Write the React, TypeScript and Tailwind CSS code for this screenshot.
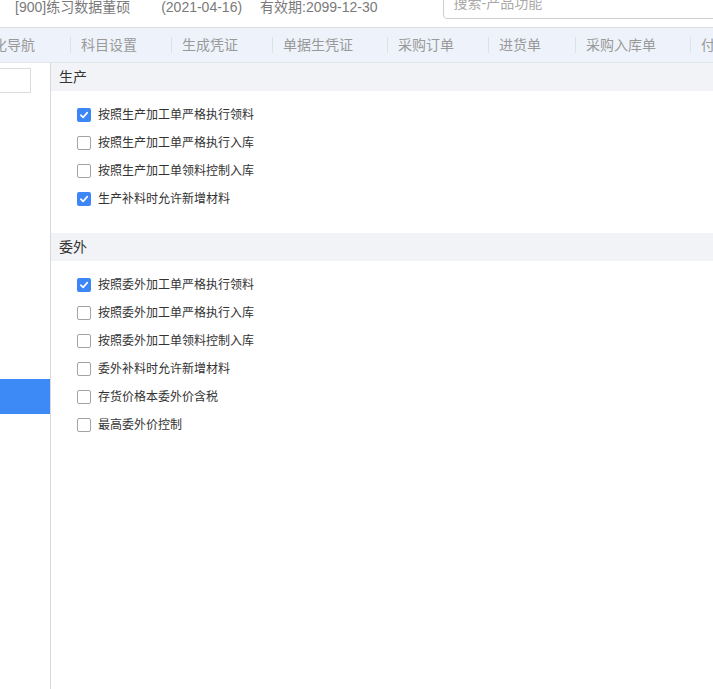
import React from 'react';

type Option = { label: string; checked: boolean };

const tabs = ['科目设置', '生成凭证', '单据生凭证', '采购订单', '进货单', '采购入库单', '付款单'];

const sections: { title: string; options: Option[] }[] = [
  {
    title: '生产',
    options: [
      { label: '按照生产加工单严格执行领料', checked: true },
      { label: '按照生产加工单严格执行入库', checked: false },
      { label: '按照生产加工单领料控制入库', checked: false },
      { label: '生产补料时允许新增材料', checked: true },
    ],
  },
  {
    title: '委外',
    options: [
      { label: '按照委外加工单严格执行领料', checked: true },
      { label: '按照委外加工单严格执行入库', checked: false },
      { label: '按照委外加工单领料控制入库', checked: false },
      { label: '委外补料时允许新增材料', checked: false },
      { label: '存货价格本委外价含税', checked: false },
      { label: '最高委外价控制', checked: false },
    ],
  },
];

function Checkbox({ checked }: { checked: boolean }) {
  if (checked) {
    return (
      <span className="flex h-[14px] w-[14px] items-center justify-center rounded-[2px] bg-[#3d86f5]">
        <svg width="10" height="10" viewBox="0 0 10 10" fill="none">
          <path d="M1.8 5.2 L4.1 7.4 L8.3 2.6" stroke="white" strokeWidth="1.6" strokeLinecap="round" strokeLinejoin="round" />
        </svg>
      </span>
    );
  }
  return <span className="h-[14px] w-[14px] rounded-[2px] border border-[#a3a3a3] bg-white" />;
}

export default function App() {
  return (
    <div className="flex h-screen flex-col overflow-hidden bg-white font-['Liberation_Sans','Noto_Sans_CJK_SC',sans-serif]">
      {/* Header */}
      <header className="flex h-[28px] shrink-0 items-end overflow-hidden border-b border-[#dcdcdc] text-[14px] leading-[20px] text-[#7a7a7a]">
        <span className="mb-[10px] ml-[15px] whitespace-nowrap">[900]练习数据董硕</span>
        <span className="mb-[10px] ml-[31px] whitespace-nowrap">(2021-04-16)</span>
        <span className="mb-[10px] ml-[18px] whitespace-nowrap">有效期:2099-12-30</span>
        <div className="mb-[8px] ml-[65px] flex h-[32px] w-[300px] shrink-0 items-center rounded-[4px] border border-[#cfcfcf] pl-[10px] text-[#a9a9a9]">
          搜索-产品功能
        </div>
      </header>

      {/* Tabs */}
      <nav className="flex h-[35px] shrink-0 items-center overflow-hidden border-b border-[#e1e6ee] bg-[#eef3fb] text-[14px] text-[#999]">
        <div className="-ml-[45px] shrink-0 whitespace-nowrap pl-[10px] pr-[35px]">可视化导航</div>
        {tabs.map((t) => (
          <div key={t} className="flex shrink-0 items-center">
            <span className="h-[16px] w-px bg-[#dde2ea]" />
            <span className="whitespace-nowrap pl-[10px] pr-[34px]">{t}</span>
          </div>
        ))}
      </nav>

      <div className="flex min-h-0 flex-1">
        {/* Sidebar */}
        <aside className="w-[51px] shrink-0 overflow-hidden border-r border-[#d9d9d9]">
          <div className="-ml-[20px] mt-[5px] h-[25px] w-[51px] border border-[#dcdcdc]" />
          <div className="mt-[286px] h-[35px] bg-[#3d8af7]" />
        </aside>

        {/* Content */}
        <main className="flex-1">
          {sections.map((s) => (
            <section key={s.title}>
              <div className="flex h-[28px] items-center bg-[#f2f3f7] pl-[8px] text-[14px] text-[#333]">{s.title}</div>
              <div className="pb-[20px] pt-[10px]">
                {s.options.map((o) => (
                  <label key={o.label} className="flex h-[28px] items-center pl-[26px] text-[12px] text-[#333]">
                    <Checkbox checked={o.checked} />
                    <span className="ml-[7px]">{o.label}</span>
                  </label>
                ))}
              </div>
            </section>
          ))}
        </main>
      </div>
    </div>
  );
}
